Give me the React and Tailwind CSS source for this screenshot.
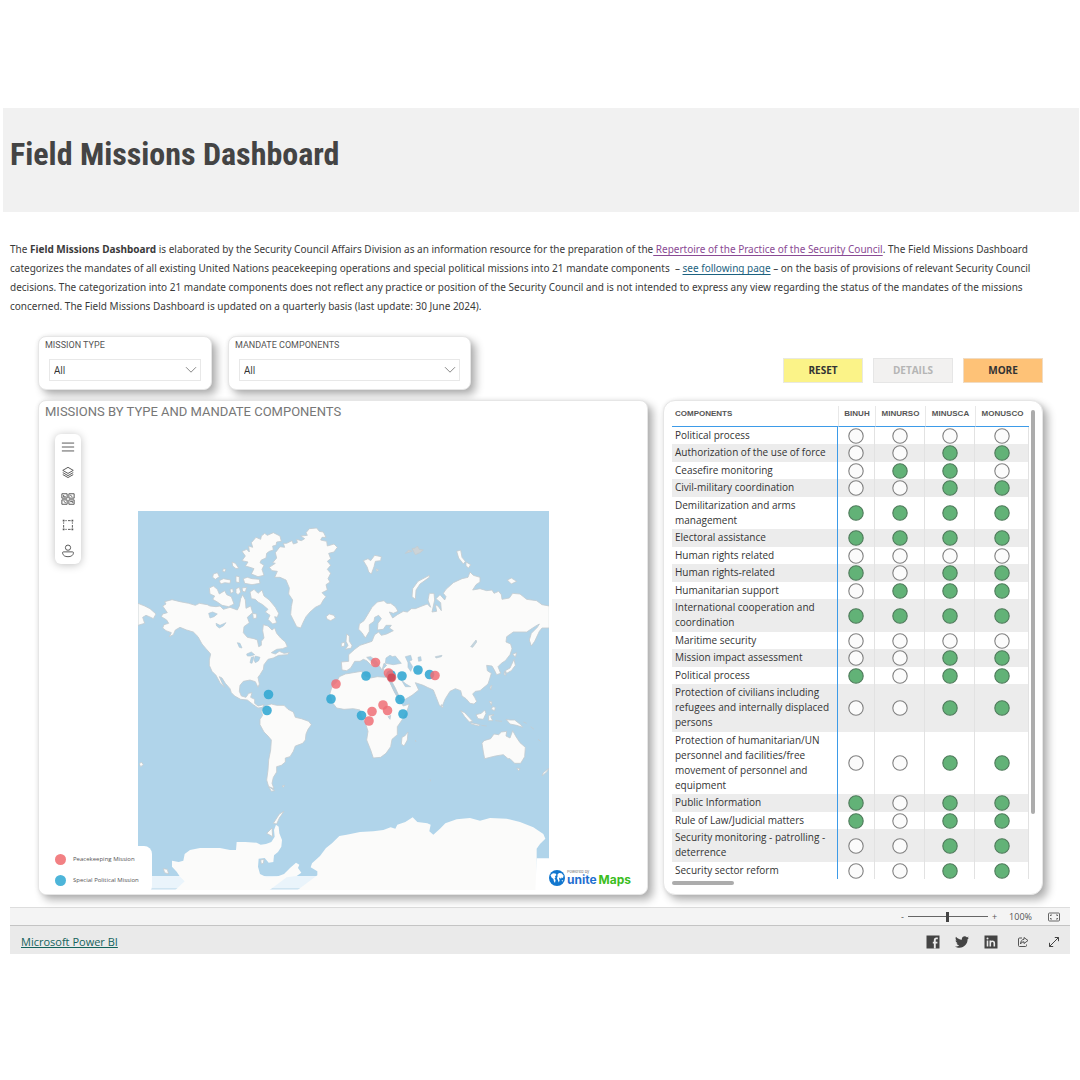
import React, { useState } from "react";
import { FaTwitter } from "react-icons/fa";

const missions = ["BINUH", "MINURSO", "MINUSCA", "MONUSCO"];

// marks: one character per mission, 1 = component is part of the mandate
const components = [
  { label: "Political process", marks: "0000" },
  { label: "Authorization of the use of force", marks: "0011" },
  { label: "Ceasefire monitoring", marks: "0110" },
  { label: "Civil-military coordination", marks: "0011" },
  { label: "Demilitarization and arms management", marks: "1111" },
  { label: "Electoral assistance", marks: "1111" },
  { label: "Human rights related", marks: "0000" },
  { label: "Human rights-related", marks: "1011" },
  { label: "Humanitarian support", marks: "0111" },
  { label: "International cooperation and coordination", marks: "1111" },
  { label: "Maritime security", marks: "0000" },
  { label: "Mission impact assessment", marks: "0011" },
  { label: "Political process", marks: "1011" },
  { label: "Protection of civilians including refugees and internally displaced persons", marks: "0011" },
  { label: "Protection of humanitarian/UN personnel and facilities/free movement of personnel and equipment", marks: "0011" },
  { label: "Public Information", marks: "1011" },
  { label: "Rule of Law/Judicial matters", marks: "1011" },
  { label: "Security monitoring - patrolling - deterrence", marks: "0011" },
  { label: "Security sector reform", marks: "0011" },
];

const politicalPins = [
  [268.5, 694.5], [267, 710.5], [366, 676], [331, 699], [402, 676],
  [418, 670], [429.5, 674.5], [400, 699.5], [403, 714], [361.5, 715.5], [391, 675],
];

const peacekeepingPins = [
  [375.5, 662.5], [336, 684], [435, 675.5], [388.5, 673], [391.5, 677.5],
  [372, 711.5], [383, 705], [387.5, 710.5], [369, 721],
];

const WorldMap = () => (
  <svg viewBox="24 33 1233 1137" className="block w-full" role="img" aria-label="World map of missions">
    <rect x="24" y="33" width="1233" height="1096" fill="#b0d4ea" />
    <rect x="24" y="1128" width="1233" height="42" fill="#eaf4fb" />
    <rect x="24" y="1164" width="600" height="4" fill="#cfe4f1" />

    <g fill="#fbfbfa" stroke="#c3cbd0" strokeWidth="2.5" strokeLinejoin="round">
      {/* North America */}
      <path d="M98 318L108 312L104 305L126 299L150 305L176 310L196 316L208 310L232 314L240 318L258 320L270 318L280 328L300 322L322 330L328 318L332 296L338 284L346 300L348 325L362 318L368 338L352 352L358 368L342 380L340 398L352 412L372 416L382 420L386 440L394 436L394 424L402 414L398 392L400 374L414 378L426 390L434 384L440 400L452 414L466 426L472 440L458 446L440 448L424 458L436 462L448 454L462 460L478 458L472 464L446 466L430 474L414 478L402 494L400 508L390 524L384 532L388 552L384 562L376 545L360 540L340 544L330 556L328 574L334 588L348 592L356 580L366 578L362 592L374 598L374 610L384 618L402 614L398 622L384 624L370 614L352 600L332 598L314 588L304 578L300 566L286 550L276 534L268 530L276 548L284 562L270 548L258 526L246 514L238 496L238 480L242 462L228 446L216 432L204 410L190 396L170 390L150 382L136 390L130 404L118 410L124 398L108 392L98 384L102 374L116 370L110 360L94 350L98 342L112 338Z" />
      <path d="M24 310L44 318L60 326L78 342L70 356L58 350L48 346L38 352L44 370L24 376Z" />
      {/* Arctic islands */}
      <path d="M238 264L250 258L262 268L268 282L284 272L290 284L304 290L312 312L296 320L276 316L262 306L248 298L254 288L240 282Z" />
      <path d="M360 276L372 268L384 280L396 270L402 288L418 300L436 322L446 340L442 352L434 350L440 368L428 372L414 358L420 346L406 336L414 328L398 314L384 306L376 298L364 296Z" />
      <path d="M336 154L350 148L358 156L356 138L368 142L364 128L378 112L392 118L394 108L404 100L412 106L430 98L450 108L454 124L440 126L438 136L428 138L430 150L418 154L410 160L408 174L394 180L390 188L402 196L396 208L402 226L384 230L364 222L372 206L360 202L346 198L354 186L336 182L346 168Z" />
      <path d="M340 236L352 232L366 236L388 238L390 250L366 254L344 250ZM250 222L262 218L268 230L256 238L248 232ZM268 242L280 236L302 240L300 250L284 248L272 252ZM306 186L316 190L326 204L318 206L308 198ZM280 206L288 208L284 216L278 214ZM318 228L328 230L328 248L318 246ZM318 266L328 262L332 276L324 284L318 278ZM336 264L350 262L346 276L338 274ZM368 340L380 342L380 354L370 356ZM300 268L308 266L310 276L302 280Z" />
      {/* Greenland and Iceland */}
      <path d="M418 202L436 190L428 188L440 174L436 158L450 140L464 142L460 130L470 130L486 122L490 132L502 128L500 118L514 122L524 116L512 108L532 106L528 98L538 86L560 84L568 94L580 96L588 112L576 112L572 120L590 124L592 138L612 132L622 142L612 156L596 160L602 176L592 184L602 196L592 208L602 220L594 236L600 246L588 254L592 270L576 278L588 290L580 300L572 314L556 322L540 336L528 350L520 366L512 384L500 380L490 360L482 344L484 320L488 300L476 282L478 264L468 240L450 232L434 232L442 214L426 212Z" />
      <path d="M588 350L598 342L612 346L616 354L602 362L592 358Z" />
    </g>

    {/* Lakes of North America */}
    <path d="M236 340L248 336L262 342L252 350L240 354ZM258 370L270 376L288 368L280 378L268 384L260 378ZM322 428L330 430L336 444L328 442ZM350 462L364 456L374 464L362 468L352 468ZM364 472L372 470L366 490L360 488ZM376 468L390 472L386 482L376 488L372 480Z" fill="#b0d4ea" stroke="#b9c8d1" strokeWidth="2" />

    <g transform="translate(0 570)" fill="#fbfbfa" stroke="#c3cbd0" strokeWidth="2.5" strokeLinejoin="round">
      {/* South America */}
      <path d="M400 52L412 46L424 42L440 46L462 46L474 58L490 66L496 82L514 86L536 94L544 104L534 118L528 132L526 150L518 160L496 168L490 184L480 200L466 204L466 216L454 226L440 230L440 246L430 262L426 280L432 296L416 290L410 270L414 240L416 210L422 180L424 150L414 138L402 126L390 104L390 88L398 76L394 64Z" />
      <path d="M416 290L434 302L424 304ZM456 288L464 286L460 292ZM28 222L34 216L40 224L32 230Z" />
      {/* Antarctica, western half */}
      <path d="M134 602L164 574L150 560L140 545L126 530L126 512L146 516L160 512L164 492L180 480L210 474L240 474L270 474L300 480L318 480L320 456L346 456L380 458L392 464L408 462L424 456L434 440L432 420L438 404L446 410L448 430L456 450L454 470L444 486L432 496L430 516L416 518L404 504L386 506L384 530L390 552L410 562L440 560L462 552L480 534L498 518L508 524L504 534L514 548L500 558L470 562L440 584L416 602Z" stroke="none" />
      <path d="M100 536L112 538L116 552L104 548ZM410 430L426 414L428 440ZM430 400L448 372L462 364L448 384L440 402ZM392 510L402 508L400 520L394 522Z" />
    </g>

    <g transform="translate(630 0)" fill="#fbfbfa" stroke="#c3cbd0" strokeWidth="2.5" strokeLinejoin="round">
      {/* Europe and Asia */}
      <path d="M4 486L26 484L26 464L44 448L60 436L84 428L96 424L104 404L116 396L124 406L140 402L160 392L148 384L154 376L138 376L130 388L112 390L114 370L124 356L116 346L104 352L102 364L88 374L88 394L76 414L66 398L56 388L58 372L72 362L84 342L96 322L112 306L132 302L140 310L152 310L166 320L174 334L160 340L148 336L158 354L172 344L190 334L202 336L214 326L226 326L246 318L262 312L272 322L264 300L268 280L282 280L284 300L276 336L290 334L286 314L294 318L304 332L302 308L288 296L300 284L314 300L318 290L310 280L318 268L340 248L366 236L384 232L390 216L400 226L420 232L420 246L408 254L398 270L420 266L440 272L456 270L462 280L476 274L484 284L486 298L508 294L518 280L540 282L560 298L590 302L606 314L628 318L628 384L606 384L598 394L584 424L574 438L568 420L574 400L592 382L598 372L584 380L560 396L520 396L500 410L498 426L512 432L516 446L510 464L496 482L484 490L474 500L482 520L470 524L462 508L456 498L440 496L442 512L454 520L448 540L444 552L432 562L420 572L406 574L398 582L404 592L410 604L402 612L390 610L378 596L366 588L362 572L346 566L330 574L316 596L306 620L298 616L288 590L280 570L262 562L250 556L226 548L236 570L216 586L192 600L178 590L166 564L154 542L150 526L134 524L130 506L140 496L132 490L126 510L118 498L108 482L92 470L80 472L104 494L98 500L80 482L70 478L60 484L44 484L32 504L20 512L6 510Z" />
      <path d="M20 402L28 408L28 424L36 436L34 444L16 448L24 436L18 424ZM4 430L14 426L14 438L4 440Z" />
      {/* Arctic coast islands */}
      <path d="M70 182L84 176L92 182L104 166L124 170L122 182L106 184L102 200L94 222L86 216L82 202ZM216 290L218 266L234 244L268 226L268 232L240 252L228 270L226 298ZM350 154L362 150L366 172L376 184L370 192L356 174ZM378 186L392 194L386 204L378 198ZM502 240L514 234L530 244L514 252ZM108 206L116 210L110 214Z" />
      <path d="M196 160L206 150L216 154ZM216 146L226 144L232 138L238 148L250 150L240 158L226 164Z" fill="#ccd3d7" />
      {/* Japan and Taiwan */}
      <path d="M518 462L530 458L526 472ZM522 478L526 496L514 512L500 520L496 512L510 504ZM494 514L498 526L492 524ZM450 560L456 556L452 570Z" />
      {/* Africa */}
      <path d="M-2 530L16 522L40 518L64 514L76 528L92 534L112 530L140 532L150 548L162 574L178 602L190 618L208 612L200 636L186 660L172 680L172 704L156 718L152 740L138 760L122 772L100 774L92 750L80 720L84 694L76 668L64 648L60 630L40 626L12 628L-10 624L-24 606L-30 580L-24 560L-10 546Z" />
    </g>

    {/* Inland seas and gulfs */}
    <g transform="translate(630 0)" fill="#b0d4ea" stroke="#b9c8d1" strokeWidth="2">
      <path d="M136 490L138 474L150 466L158 470L166 468L174 478L184 490L160 494ZM196 470L212 466L216 480L208 484L218 500L212 514L204 502L204 488ZM234 472L242 470L244 482L236 484ZM184 540L198 552L212 560L196 560ZM144 534L150 540L168 574L178 596L166 580Z" />
      <path d="M392 440L408 420L410 426L398 442ZM286 470L306 466L304 470L288 474ZM144 650L152 646L150 658Z" fill="#c3d6e0" />
    </g>

    <g transform="translate(630 570)" fill="#fbfbfa" stroke="#c3cbd0" strokeWidth="2.5" strokeLinejoin="round">
      <path d="M204 126L202 150L192 168L184 162L186 142L194 138Z" />
      {/* Australia, Tasmania, New Zealand */}
      <path d="M426 160L432 152L452 146L462 132L476 134L484 126L500 124L498 138L510 144L518 122L528 140L540 158L556 172L554 200L542 220L524 220L510 206L504 206L490 194L466 198L434 206L430 186Z" />
      <path d="M530 234L540 236L536 242ZM628 234L620 246L606 258L610 248Z" />
      {/* Indonesia, New Guinea, Philippines */}
      <path d="M362 62L374 68L398 94L388 96L374 80ZM408 74L424 70L434 60L438 70L430 88L414 86ZM392 98L420 104L416 108L394 102ZM446 76L462 74L452 80L458 92L446 92ZM498 88L510 90L524 90L542 104L548 112L530 106L510 102ZM448 34L456 36L454 46ZM458 50L466 52L464 62L454 58ZM304 44L310 48L306 54Z" />
      <path d="M550 96L560 100M572 110L582 118M594 148L602 154M424 106L440 108M466 92L486 94M226 150L228 156M270 268L272 274" fill="none" />
      {/* Antarctica, eastern half */}
      <path d="M-130 602L-100 580L-68 556L-68 544L-88 532L-84 520L-60 498L-42 474L-24 460L-2 438L20 434L60 426L100 424L130 420L152 412L166 416L172 404L196 396L218 382L232 396L262 400L272 404L268 424L280 434L300 416L316 400L350 388L390 384L420 392L450 384L500 386L540 396L580 412L610 432L616 446L600 462L590 476L590 602Z" stroke="none" />
      <path d="M590 505H630V605H586Z" fill="#fff" stroke="none" />
    </g>

    {/* Mission pins */}
    <g transform="scale(3) translate(-130 -500)">
      {politicalPins.map(([x, y]) => (
        <circle key={`${x}-${y}`} cx={x} cy={y} r="4.8" fill="#35a9d3" fillOpacity="0.9" />
      ))}
      {peacekeepingPins.map(([x, y]) => (
        <circle key={`${x}-${y}`} cx={x} cy={y} r="4.8" fill="#ef6f75" fillOpacity="0.85" />
      ))}
      <circle cx="391.5" cy="677.5" r="4" fill="#c94552" fillOpacity="0.8" />
    </g>
  </svg>
);

const tools = [
  {
    label: "Menu",
    icon: <path d="M1 3.5h14M1 8h14M1 12.5h14" />,
  },
  {
    label: "Layers",
    icon: <path d="M8 1.5L14 5L8 8.5L2 5ZM2 7.5L8 11L14 7.5M2 9.8L8 13.2L14 9.8" />,
  },
  {
    label: "Basemaps",
    icon: <path d="M1 2h6v5H1zM9 2h6v5H9zM1 9h6v5H1zM9 9h6v5H9zM3 3.5v2h2.5M10.5 3.5l2.5 2M3 10.5l2.5 2M10.5 11h3v1.5" />,
  },
  {
    label: "Select area",
    icon: (
      <>
        <path d="M3 5v1.5M3 8v3M13 5v1.5M13 8v3M5 3h1.5M8 3h3M5 13h1.5M8 13h3" />
        <path d="M2 2h2v2H2zM12 2h2v2h-2zM2 12h2v2H2zM12 12h2v2h-2z" fill="currentColor" stroke="none" />
      </>
    ),
  },
  {
    label: "Street view",
    icon: <path d="M8 1.2a3 3 0 1 1 0 6a3 3 0 1 1 0-6ZM2.8 9h10.4q1.2 0 1 1.5q-.8 4-6.2 4t-6.2-4q-.2-1.5 1-1.5Z" />,
  },
];

const Filter = ({ id, title, options, width }) => (
  <div className={`${width} h-[54px] rounded-lg border border-[#e6e6e6] bg-white px-1.5 pt-px shadow-[5px_5px_8px_rgba(0,0,0,0.3),0_0_4px_rgba(0,0,0,0.08)]`}>
    <label htmlFor={id} className="block font-['Roboto',sans-serif] text-[9px] leading-[14px] text-[#555]">
      {title}
    </label>
    <div className="relative mx-1 mt-[7px]">
      <select id={id} className="block h-[22px] w-full appearance-none border border-[#e8e8e8] bg-white px-1 text-[10px] leading-5 text-[#333]">
        {options.map((option) => (
          <option key={option}>{option}</option>
        ))}
      </select>
      <svg viewBox="0 0 12 8" className="pointer-events-none absolute top-[7px] right-1 h-2 w-3" fill="none" stroke="#888" aria-hidden="true">
        <path d="M1 1.2L6 6.2L11 1.2" />
      </svg>
    </div>
  </div>
);

const Mark = ({ on }) => (
  <svg viewBox="0 0 16 16" className="mx-auto block size-4" role="img" aria-label={on ? "Yes" : "No"}>
    <circle cx="8" cy="8" r="7.2" fill={on ? "#62b277" : "#fbfbfb"} stroke={on ? "#4e7a5a" : "#808080"} strokeWidth="1.1" />
  </svg>
);

const Logo = () => (
  <div className="absolute right-4 bottom-2 flex items-center gap-0.5">
    <svg viewBox="0 0 16 16" className="size-4" aria-hidden="true">
      <circle cx="8" cy="8" r="8" fill="#1277cf" />
      <path d="M1.5 5L4 3.2L6.5 3.5L7.5 5L6 6.2L6.5 7.5L5.5 8.5L6.6 10L6 13L4.8 11L4.5 9L2.5 7.5ZM8.5 4.5L10 3L12.5 3.2L14.6 5.5L14 8L12.5 7.5L12 9L10.8 7.5L10 8.5L10.6 10.5L9.8 12.5L8.8 10L8 8L8.6 6.5ZM12.5 10.5L14 10L13.5 11.8Z" fill="#fff" />
    </svg>
    <div className="font-['Inter',sans-serif]">
      <div className="text-[4px] leading-[4px] text-[#777]">Powered by</div>
      <div className="flex gap-0.5 text-[12px] leading-3 font-bold">
        <span className="text-[#1f6fd0]">unite</span>
        <span className="text-[#3bbd1e]">Maps</span>
      </div>
    </div>
  </div>
);

export default function App() {
  const [zoom, setZoom] = useState(50);

  return (
    <div className="bg-white pt-[108px] font-['Open_Sans','Noto_Sans',sans-serif] text-[#3a3a3a]">
      <header className="mr-px ml-[3px] h-[104px] bg-[#f1f1f1] px-[7px] pt-6">
        <h1 className="font-['Roboto_Condensed','Roboto',sans-serif] text-[32px] leading-[44px] font-bold text-[#444]">
          Field Missions Dashboard
        </h1>
      </header>

      <p className="mt-7 px-2.5 font-['Noto_Sans',sans-serif] text-[10px] leading-[19px]">
        The <b className="font-bold">Field Missions Dashboard</b> is elaborated by the Security Council Affairs Division as an information resource for the preparation of the
        <a href="#repertoire" className="text-[#8a4a94] underline underline-offset-2"> Repertoire of the Practice of the Security Council</a>. The Field Missions Dashboard
        <br />
        categorizes the mandates of all existing United Nations peacekeeping operations and special political missions into 21 mandate components &nbsp;–{" "}
        <a href="#following" className="text-[#1c6280] underline underline-offset-2">see following page</a> – on the basis of provisions of relevant Security Council
        <br />
        decisions. The categorization into 21 mandate components does not reflect any practice or position of the Security Council and is not intended to express any view regarding the status of the mandates of the missions
        <br />
        concerned. The Field Missions Dashboard is updated on a quarterly basis (last update: 30 June 2024).
      </p>

      <main className="mt-5 pr-[37px] pl-[38px]">
        <div className="flex items-center gap-4">
          <Filter id="mission-type" title="MISSION TYPE" options={["All"]} width="w-[174px]" />
          <Filter id="mandate" title="MANDATE COMPONENTS" options={["All"]} width="w-[243px]" />
          <div className="ml-auto flex gap-2.5 pt-3.5 text-[10px] font-bold">
            <button type="button" className="h-[25px] w-20 border border-[#e9e9e0] bg-[#fbf388] text-[#333]">RESET</button>
            <button type="button" disabled className="h-[25px] w-20 border border-[#e6e6e6] bg-[#f2f1f0] text-[#b5b5b5]">DETAILS</button>
            <button type="button" className="h-[25px] w-20 border border-[#f0dcc4] bg-[#fec277] text-[#333]">MORE</button>
          </div>
        </div>

        <div className="mt-2.5 flex gap-[15px]">
          {/* Map */}
          <section className="relative min-w-0 flex-1 rounded-lg border border-[#e6e6e6] bg-white pb-1 shadow-[5px_5px_8px_rgba(0,0,0,0.3),0_0_4px_rgba(0,0,0,0.08)]">
            <h2 className="px-1.5 pt-px font-['Roboto',sans-serif] text-[13px] leading-5 text-[#777]">
              MISSIONS BY TYPE AND MANDATE COMPONENTS
            </h2>
            <div className="flex pt-3">
              <div className="w-[99px] shrink-0 pl-4">
                <div className="flex w-[26px] flex-col rounded-md bg-white shadow-[0_1px_8px_rgba(0,0,0,0.25)]">
                  {tools.map((tool) => (
                    <button key={tool.label} type="button" aria-label={tool.label} className="flex h-[26px] items-center justify-center text-[#555]">
                      <svg viewBox="0 0 16 16" className="size-3.5" fill="none" stroke="currentColor" strokeWidth="1.1" aria-hidden="true">
                        {tool.icon}
                      </svg>
                    </button>
                  ))}
                </div>
              </div>
              <div className="mt-[77px] mr-[98px] min-w-0 flex-1">
                <WorldMap />
              </div>
            </div>

            <ul className="absolute bottom-0 left-0 flex w-[113px] flex-col gap-1.5 rounded-lg bg-white py-1.5 pl-4 text-[6px] leading-[15px] whitespace-nowrap text-[#555]">
              <li className="flex items-center gap-[7px]">
                <span className="size-[11px] rounded-full bg-[#f28083]" />
                Peacekeeping Mission
              </li>
              <li className="flex items-center gap-[7px]">
                <span className="size-[11px] rounded-full bg-[#4db5d9]" />
                Special Political Mission
              </li>
            </ul>
            <Logo />
          </section>

          {/* Component matrix */}
          <section className="w-[380px] shrink-0 rounded-xl border border-[#e6e6e6] bg-white pt-[5px] pl-2 shadow-[5px_5px_8px_rgba(0,0,0,0.3),0_0_4px_rgba(0,0,0,0.08)]">
            <div className="flex gap-0.5">
              <table className="w-[357px] table-fixed border-separate border-spacing-0 text-[10px] text-[#333]">
                <colgroup>
                  <col className="w-[166px]" />
                  <col className="w-[37px]" />
                  <col className="w-[50px]" />
                  <col className="w-[50px]" />
                  <col className="w-[54px]" />
                </colgroup>
                <thead>
                  <tr className="h-[21px] font-['Liberation_Sans',sans-serif] text-[8px] leading-4 text-[#555]">
                    <th className="border-b border-b-[#3d9be8] pb-1 pl-[3px] text-left">COMPONENTS</th>
                    {missions.map((name) => (
                      <th key={name} className="border-b border-l border-b-[#3d9be8] border-l-[#e8e8e8] pb-1">{name}</th>
                    ))}
                  </tr>
                </thead>
                <tbody>
                  {components.map((row, i) => (
                    <tr key={i} className="even:bg-[#ececec]">
                      <th scope="row" className={`border-r border-r-[#3d9be8] pl-[3px] text-left leading-[15px] font-normal ${i % 2 ? "pt-px pb-0.5" : "py-px"}`}>
                        {row.label}
                      </th>
                      {row.marks.split("").map((mark, j) => (
                        <td key={j} className="border-r border-r-[#e2e2e2] p-0 align-middle">
                          <Mark on={mark === "1"} />
                        </td>
                      ))}
                    </tr>
                  ))}
                </tbody>
              </table>
              <div className="mt-1 h-[404px] w-1 rounded-full bg-[#acacac]" />
            </div>
            <div className="mt-0.5 h-1 w-[62px] rounded-full bg-[#acacac]" />
          </section>
        </div>
      </main>

      <footer className="mx-2.5 mt-3">
        <div className="flex h-[18px] items-center justify-end border-t border-[#ddd] bg-[#f4f4f4] pr-2.5 text-[9px] text-[#555]">
          <button type="button" aria-label="Zoom out" className="px-1">-</button>
          <input
            type="range"
            aria-label="Zoom"
            value={zoom}
            onChange={(e) => setZoom(Number(e.target.value))}
            className="h-3 w-20 appearance-none bg-[linear-gradient(#666,#666)] bg-[length:100%_1px] bg-center bg-no-repeat [&::-webkit-slider-thumb]:h-2.5 [&::-webkit-slider-thumb]:w-[3px] [&::-webkit-slider-thumb]:appearance-none [&::-webkit-slider-thumb]:bg-[#444]"
          />
          <button type="button" aria-label="Zoom in" className="px-1">+</button>
          <span className="ml-2">100%</span>
          <button type="button" aria-label="Fit to page" className="ml-4">
            <svg viewBox="0 0 12 10" className="h-2.5 w-3" fill="none" stroke="#666" aria-hidden="true">
              <rect x="0.5" y="1" width="11" height="8" rx="1" />
              <path d="M2.5 4V3H4M8 3h1.5v1M2.5 6v1H4M8 7h1.5V6" />
            </svg>
          </button>
        </div>
        <div className="flex h-[29px] items-center border-t border-[#c4c4c4] bg-[#eaeaea] pt-1 pr-2.5 pl-[11px]">
          <a href="#powerbi" className="text-[11px] text-[#14635c] underline">Microsoft Power BI</a>
          <div className="ml-auto flex items-center gap-[15px] text-[#444]">
            <button type="button" aria-label="Share on Facebook">
              <svg viewBox="0 0 14 14" className="size-3.5" aria-hidden="true">
                <path d="M0.5 0.5h13v13h-13Z" fill="currentColor" />
                <path d="M11.8 3.4h-1.4q-1.6 0-1.6 1.6v8.5M6.8 7.6h4.6" fill="none" stroke="#eaeaea" strokeWidth="1.9" />
              </svg>
            </button>
            <button type="button" aria-label="Share on Twitter"><FaTwitter className="size-3.5" /></button>
            <button type="button" aria-label="Share on LinkedIn">
              <svg viewBox="0 0 14 14" className="size-3.5" aria-hidden="true">
                <path d="M0.5 0.5h13v13h-13Z" fill="currentColor" />
                <path d="M3.5 5.5v6M6.3 5.5v6M6.3 8.2q0-2 2-2t2 2v3.3" fill="none" stroke="#eaeaea" strokeWidth="1.6" />
                <circle cx="3.5" cy="3.4" r="1" fill="#eaeaea" />
              </svg>
            </button>
            <button type="button" aria-label="Share" className="ml-1">
              <svg viewBox="0 0 12 12" className="size-3" fill="none" stroke="currentColor" strokeWidth="0.9" aria-hidden="true">
                <path d="M5 2H2.5Q1.5 2 1.5 3V9.5Q1.5 10.5 2.5 10.5H8.5Q9.5 10.5 9.5 9.5V8.5M7 1.5L11 4.5L7 7.5V5.8Q4.5 5.6 3.5 8Q3.8 3.6 7 3.3Z" />
              </svg>
            </button>
            <button type="button" aria-label="Full screen" className="ml-1">
              <svg viewBox="0 0 12 12" className="size-3" fill="none" stroke="currentColor" aria-hidden="true">
                <path d="M1.5 10.5L10.5 1.5M6.8 1.5H10.5V5.2M1.5 6.8V10.5H5.2" />
              </svg>
            </button>
          </div>
        </div>
      </footer>
    </div>
  );
}
